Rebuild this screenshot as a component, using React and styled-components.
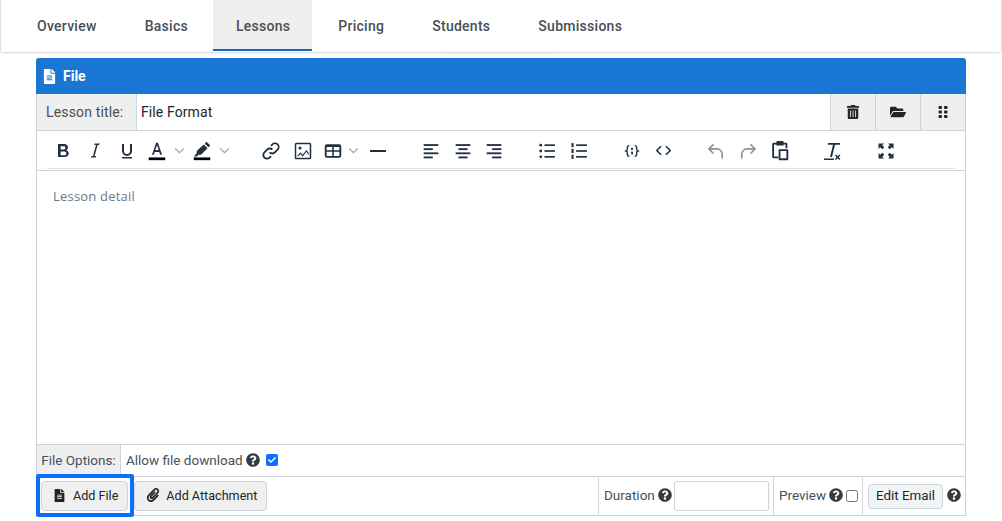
import React from "react";
import styled, { createGlobalStyle } from "styled-components";
import { FaFileAlt, FaTrashAlt, FaFolderOpen, FaQuestionCircle, FaPaperclip, FaCheck } from "react-icons/fa";

const Global = createGlobalStyle`
  html, body { margin: 0; padding: 0; background: #fff; }
  body { font-family: Roboto, "Liberation Sans", sans-serif; width: 1002px; height: 521px; overflow: hidden; }
  * { box-sizing: border-box; }
`;

const Page = styled.div`
  display: flex;
  flex-direction: column;
  align-items: center;
  width: 1002px;
`;
const Nav = styled.nav`
  position: relative;
  width: 1000px;
  height: 52px;
  padding: 0 12px;
  display: flex;
  background: #fff;
  border-radius: 0 0 2px 2px;
  box-shadow: 0 0 3px rgba(0, 0, 0, 0.35);
`;
const Tab = styled.div`
  height: 51px;
  padding: 2px ${(p) => (p.$active ? "22px" : "24px")} 0 ${(p) => (p.$active ? "23px" : "24px")};
  margin: 0 ${(p) => (p.$active ? "2px" : "0")} 0 ${(p) => (p.$active ? "1px" : "0")};
  display: flex;
  align-items: center;
  font-size: 14px;
  font-weight: 500;
  letter-spacing: 0.27px;
  color: #495057;
  background: ${(p) => (p.$active ? "#efefef" : "transparent")};
  border-bottom: 2px solid ${(p) => (p.$active ? "#1565c0" : "transparent")};
`;
const Peek = styled.div`
  position: absolute;
  left: 444px;
  top: 52px;
  width: 113px;
  height: 1px;
  background: #dcdcdc;
`;
const Card = styled.section`
  width: 930px;
  height: 458px;
  margin-top: 6px;
  display: flex;
  flex-direction: column;
`;
const Header = styled.header`
  height: 36px;
  flex: none;
  display: flex;
  align-items: center;
  gap: 6px;
  padding-left: 6px;
  background: #1976d2;
  color: #fff;
  font-size: 14px;
  font-weight: 700;
  border-radius: 3px 3px 0 0;
  svg { font-size: 15px; }
`;
const Body = styled.div`
  flex: 1;
  display: flex;
  flex-direction: column;
  border: 1px solid #cdd0d4;
  border-top: 0;
`;
const TitleRow = styled.div`
  height: 37px;
  flex: none;
  display: flex;
  border-bottom: 1px solid #ced4da;
`;
const Label = styled.div`
  width: 100px;
  display: flex;
  align-items: center;
  padding-left: 9px;
  background: #efefef;
  border-right: 1px solid #ced4da;
  font-size: 14px;
  letter-spacing: 0.15px;
  color: #495057;
`;
const TitleInput = styled.div`
  flex: 1;
  display: flex;
  align-items: center;
  padding-left: 4px;
  font-size: 14px;
  letter-spacing: 0.1px;
  color: #212529;
`;
const SideButton = styled.div`
  width: 45px;
  display: flex;
  align-items: center;
  justify-content: center;
  background: #efefef;
  border-left: 1px solid #ced4da;
  color: #212529;
  font-size: ${(p) => p.$size || 14}px;
`;
const Toolbar = styled.div`
  height: 40px;
  flex: none;
  padding: 0 10px;
  display: flex;
  align-items: center;
  border-bottom: 1px solid #ced4da;
  position: relative;
  &::after {
    content: "";
    position: absolute;
    left: 10px;
    right: 10px;
    bottom: 1px;
    border-bottom: 1px solid #e2e2e2;
  }
`;
const Tool = styled.span`
  width: ${(p) => p.$w || 32}px;
  margin-right: ${(p) => p.$gap || 0}px;
  height: 24px;
  flex: none;
  display: flex;
  align-items: center;
  justify-content: center;
  svg { display: block; }
`;
const Editor = styled.div`
  height: 273px;
  flex: none;
  padding: 16px 16px;
  font-family: "Open Sans", sans-serif;
  font-size: 13px;
  line-height: 18px;
  letter-spacing: 0.2px;
  color: #6b7885;
`;
const OptionsRow = styled.div`
  height: 33px;
  flex: none;
  display: flex;
  border-top: 1px solid #ced4da;
  border-bottom: 1px solid #ced4da;
`;
const OptionsLabel = styled.div`
  width: 84px;
  padding-bottom: 2px;
  display: flex;
  align-items: center;
  justify-content: center;
  background: #efefef;
  border-right: 1px solid #ced4da;
  font-size: 13.5px;
  color: #495057;
`;
const OptionsValue = styled.div`
  display: flex;
  align-items: center;
  padding: 0 0 2px 5px;
  gap: 3px;
  font-size: 13.5px;
  color: #495057;
`;
const Help = styled(FaQuestionCircle)`
  font-size: 14px;
  color: #343a40;
  flex: none;
`;
const CellHelp = styled(Help)`
  margin-bottom: 2px;
`;
const CellText = styled.span`
  margin-bottom: 2px;
`;
const Check = styled.span`
  width: 12px;
  height: 12px;
  margin-left: 3px;
  display: flex;
  align-items: center;
  justify-content: center;
  background: #0d6efd;
  border-radius: 2px;
  color: #fff;
  font-size: 8px;
`;
const Unchecked = styled.span`
  width: 12px;
  height: 12px;
  border: 1px solid #767676;
  border-radius: 2.5px;
  background: #fff;
  flex: none;
`;
const BottomRow = styled.div`
  flex: 1;
  display: flex;
  align-items: stretch;
`;
const Actions = styled.div`
  flex: 1;
  display: flex;
  align-items: center;
  padding-left: 4px;
  gap: 6px;
`;
const Button = styled.button`
  position: relative;
  height: 30px;
  padding: 0 9px 2px ${(p) => p.$left || 10.5}px;
  display: inline-flex;
  align-items: center;
  gap: ${(p) => p.$gap || 7.5}px;
  font-family: inherit;
  font-size: 12.6px;
  color: #212529;
  background: #efefef;
  border: 1px solid #ced4da;
  border-radius: 4px;
  svg { font-size: ${(p) => p.$icon || 13}px; }
`;
const Highlight = styled.span`
  position: absolute;
  left: -6px;
  right: -7px;
  top: -8px;
  bottom: -7px;
  border: 4px solid #0d6efd;
  border-radius: 2px;
  pointer-events: none;
`;
const Cell = styled.div`
  width: ${(p) => p.$width}px;
  flex: none;
  display: flex;
  align-items: center;
  gap: ${(p) => p.$gap ?? 3}px;
  padding-left: 5px;
  border-left: 1px solid #ced4da;
  font-size: 13.5px;
  color: #495057;
`;
const Duration = styled.div`
  width: 95px;
  height: 30px;
  margin-left: -1px;
  background: #fff;
  border: 1px solid #ced4da;
  border-radius: 2px;
`;
const EmailButton = styled.button`
  height: 25px;
  width: 75px;
  padding: 0 0 2px;
  font-family: inherit;
  font-size: 13.4px;
  color: #212529;
  background: #f3f4f6;
  border: 1px solid #ced4da;
  border-radius: 4px;
`;

const ic = "#222f3e";
const Svg = ({ children, c = ic, w = 24, h = 24 }) => (
  <svg width={w} height={h} viewBox="0 0 24 24" fill={c}>{children}</svg>
);

const Chevron = () => (
  <svg width="11" height="7" viewBox="0 0 12 8"><path d="M1 1.500l5 5 5-5" fill="none" stroke="#9aa0a6" strokeWidth="1.300" /></svg>
);
const Bold = () => <Svg><path fillRule="evenodd" d="M7 5h6.200c2.300 0 3.800 1.400 3.800 3.300 0 1.300-.7 2.300-1.700 2.900 1.400.5 2.400 1.700 2.400 3.300 0 2.200-1.700 3.500-4.200 3.500H7V5zm2.600 2.200v3.300h3.200c1 0 1.600-.7 1.600-1.700 0-1-.6-1.600-1.600-1.600H9.600zm0 5.400v3.700h3.800c1.100 0 1.900-.7 1.900-1.900 0-1.100-.8-1.800-1.900-1.800H9.600z" /></Svg>;
const Italic = () => <Svg><path d="M16.700 5l-.3 1.200-1.800.3-3 11 1.700.3-.3 1.200H8l.3-1.200 1.700-.3 3-11-1.700-.3.3-1.200z" transform="translate(0 -.5)" /></Svg>;
const Underline = () => <Svg><path d="M7 18h10v1.500H7zM7 5h2v7a3 3 0 006 0V5h2v7a5 5 0 01-10 0z" /></Svg>;
const TextColor = () => <Svg w={22} h={22}><path d="M3 19h18v3H3z" fill="#000" /><path fillRule="evenodd" d="M11 3h2l4.500 13h-2.100l-1-3H9.500l-1 3H6.500L11 3zm1 2.800L10.100 11h3.800L12 5.800z" /></Svg>;
const HighlightIcon = () => <Svg w={22} h={22}><path d="M3 19h18v3H3z" fill="#000" /><path d="M17 2l4 4-2 2-4-4zM14 5l4 4-6.500 6.500c-1 .8-2.500.5-3 .5L6 18H3l3.200-3.500c0-.8-.2-2.300.6-3z" /></Svg>;
const LinkIcon = () => <Svg w={22} h={22}><g fill="none" stroke={ic} strokeWidth="2"><path d="M10.500 13.500a4 4 0 005.700 0l3-3a4 4 0 00-5.700-5.700l-1.500 1.500" /><path d="M13.500 10.500a4 4 0 00-5.700 0l-3 3a4 4 0 005.700 5.700l1.500-1.500" /></g></Svg>;
const ImageIcon = () => <Svg w={18} h={18}><path fillRule="evenodd" d="M3 1h18a2 2 0 012 2v18a2 2 0 01-2 2H3a2 2 0 01-2-2V3a2 2 0 012-2zm0 2v18h18V3H3z" /><circle cx="8" cy="8" r="2" /><path d="M4 19l4.500-5.500 3 3.500 5-6.500 3.500 4.500v2h-.5l-3-4-5 6.500-3-3.500-2.500 3z" /></Svg>;
const TableIcon = () => <Svg w={18} h={18}><path fillRule="evenodd" d="M4 3h16a3 3 0 013 3v12a3 3 0 01-3 3H4a3 3 0 01-3-3V6a3 3 0 013-3zm-.5 3.500V11H11V6.500H3.500zM13 6.500V11h7.500V6.500H13zM3.500 13v5.500H11V13H3.500zm9.500 0v5.500h7.500V13H13z" /></Svg>;
const Hr = () => <Svg><path d="M4 11h16v2H4z" /></Svg>;
const Align = ({ r }) => (
  <Svg w={22} h={22}>{[4.5, 9, 13.5, 18].map((y, i) => {
    const w = i % 2 ? 10 : 16;
    const x = r === "left" ? 4 : r === "right" ? 20 - w : 12 - w / 2;
    return <rect key={i} x={x} y={y} width={w} height="2" />;
  })}</Svg>
);
const Bullets = () => <Svg w={20} h={20}>{[5, 12, 19].map((y) => <g key={y}><circle cx="4.500" cy={y} r="1.700" /><rect x="9" y={y - 1} width="12.500" height="2" /></g>)}</Svg>;
const Numbers = () => <Svg w={20} h={20}>{[5, 12, 19].map((y) => <g key={y}><rect x="3" y={y - 2.5} width="2.500" height="5" /><rect x="8.500" y={y - 1} width="13" height="2" /></g>)}</Svg>;
const CodeBlock = () => <Svg w={16} h={16}><path d="M8 4C5.500 4 5 5 5 7v2.500c0 1-.5 2-2 2.500 1.500.5 2 1.500 2 2.500V17c0 2 .5 3 3 3" fill="none" stroke={ic} strokeWidth="2" /><path d="M16 4c2.500 0 3 1 3 3v2.500c0 1 .5 2 2 2.500-1.500.5-2 1.500-2 2.500V17c0 2-.5 3-3 3" fill="none" stroke={ic} strokeWidth="2" /><circle cx="12" cy="9" r="1.700" /><path d="M10.500 13h3v2c0 1.500-.5 2.500-2 3l-.5-.8c.5-.4.800-.8.800-1.500h-1.300z" /></Svg>;
const Code = () => <Svg w={17} h={17}><path d="M8.500 6l-6 6 6 6M15.500 6l6 6-6 6" fill="none" stroke={ic} strokeWidth="2.200" /></Svg>;
const Undo = () => <Svg c="#8b929a" w={20} h={20}><path d="M9 4L3.500 9.500 9 15M4 9.500h9a6.500 6.500 0 016.500 6.500v5" fill="none" stroke="#8b929a" strokeWidth="2" /></Svg>;
const Redo = () => <Svg c="#8b929a" w={20} h={20}><path d="M15 4l5.500 5.500L15 15M20 9.500h-9A6.500 6.500 0 004.500 16v5" fill="none" stroke="#8b929a" strokeWidth="2" /></Svg>;
const Paste = () => <Svg w={22} h={22}><path fillRule="evenodd" d="M9.500 1h5a1.500 1.500 0 011.500 1.500V3h2.500A1.500 1.500 0 0120 4.500V9h-2V5h-2v1H8V5H5.500v13H10v2H5a1.500 1.500 0 01-1.500-1.500v-14A1.500 1.500 0 015 3h3v-.5A1.500 1.500 0 019.500 1z" /><path fillRule="evenodd" d="M11.500 10H20a1 1 0 011 1v10a1 1 0 01-1 1h-8.500a1 1 0 01-1-1V11a1 1 0 011-1zm1 2v8H19v-8h-6.500z" /></Svg>;
const ClearFormat = () => <Svg><path d="M8 4h12v1.800h-5L12 18H10l3-12.200H8zM4 19.500h10V21H4zM16 15.500l1.700 1.700 1.700-1.700 1 1-1.700 1.700 1.700 1.700-1 1-1.700-1.700-1.700 1.700-1-1 1.700-1.700-1.700-1.700z" /></Svg>;
const Fullscreen = () => <Svg w={20} h={20}><path d="M3 3h6.500L7.500 5l2.500 2.500L7.500 10 5 7.500 3 9.500zM21 3v6.500l-2-2L16.500 10 14 7.500 16.500 5l-2-2zM3 21v-6.500l2 2L7.500 14l2.500 2.500L7.500 19l2 2zM21 21h-6.500l2-2-2.500-2.500 2.500-2.500 2.500 2.500 2-2z" /></Svg>;
const Grip = () => (
  <svg width="10" height="12" viewBox="0 0 10 12" fill="#212529">
    {[1.5, 6, 10.5].map((y) => <g key={y}><rect x="0.500" y={y - 1.5} width="3.500" height="3" rx="1" /><rect x="6" y={y - 1.5} width="3.500" height="3" rx="1" /></g>)}
  </svg>
);

export default function App() {
  return (
    <Page>
      <Global />
      <Nav>
        <Tab>Overview</Tab>
        <Tab>Basics</Tab>
        <Tab $active>Lessons</Tab>
        <Tab>Pricing</Tab>
        <Tab>Students</Tab>
        <Tab>Submissions</Tab>
        <Peek />
      </Nav>
      <Card>
        <Header><FaFileAlt /> File</Header>
        <Body>
          <TitleRow>
            <Label>Lesson title:</Label>
            <TitleInput>File Format</TitleInput>
            <SideButton><FaTrashAlt /></SideButton>
            <SideButton $size={16}><FaFolderOpen /></SideButton>
            <SideButton><Grip /></SideButton>
          </TitleRow>
          <Toolbar>
            <Tool><Bold /></Tool>
            <Tool><Italic /></Tool>
            <Tool $w={31}><Underline /></Tool>
            <Tool $w={30}><TextColor /></Tool>
            <Tool $w={14}><Chevron /></Tool>
            <Tool $w={32}><HighlightIcon /></Tool>
            <Tool $w={12} $gap={25}><Chevron /></Tool>
            <Tool><LinkIcon /></Tool>
            <Tool><ImageIcon /></Tool>
            <Tool $w={28}><TableIcon /></Tool>
            <Tool $w={12} $gap={6}><Chevron /></Tool>
            <Tool $w={26} $gap={24}><Hr /></Tool>
            <Tool><Align r="left" /></Tool>
            <Tool $w={31}><Align r="center" /></Tool>
            <Tool $gap={21}><Align r="right" /></Tool>
            <Tool><Bullets /></Tool>
            <Tool $gap={21}><Numbers /></Tool>
            <Tool $w={31}><CodeBlock /></Tool>
            <Tool $gap={20}><Code /></Tool>
            <Tool $w={33}><Undo /></Tool>
            <Tool><Redo /></Tool>
            <Tool $gap={20}><Paste /></Tool>
            <Tool $gap={22}><ClearFormat /></Tool>
            <Tool><Fullscreen /></Tool>
          </Toolbar>
          <Editor>Lesson detail</Editor>
          <OptionsRow>
            <OptionsLabel>File Options:</OptionsLabel>
            <OptionsValue>
              Allow file download <Help /> <Check><FaCheck /></Check>
            </OptionsValue>
          </OptionsRow>
          <BottomRow>
            <Actions>
              <Button><Highlight /><FaFileAlt /> Add File</Button>
              <Button $left={11} $gap={6} $icon={14}><FaPaperclip /> Add Attachment</Button>
            </Actions>
            <Cell $width={175}><CellText>Duration</CellText><CellHelp /><Duration /></Cell>
            <Cell $width={89}><CellText>Preview</CellText><CellHelp /><Unchecked /></Cell>
            <Cell $width={103} $gap={4}><EmailButton>Edit Email</EmailButton><CellHelp /></Cell>
          </BottomRow>
        </Body>
      </Card>
    </Page>
  );
}
